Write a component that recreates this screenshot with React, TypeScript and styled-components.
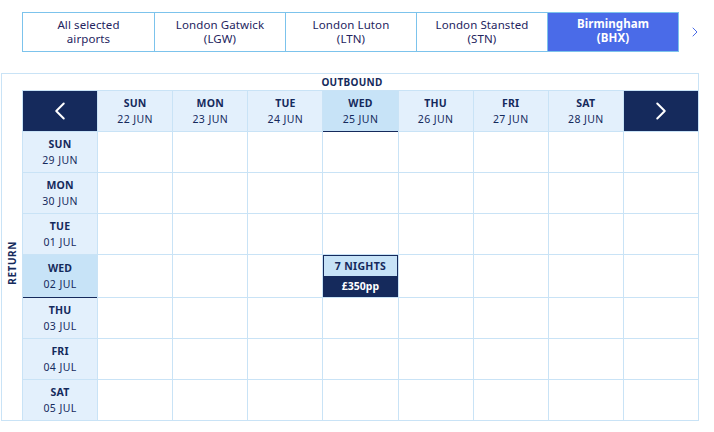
import React from "react";
import styled, { createGlobalStyle, css } from "styled-components";
import { ChevronLeft, ChevronRight } from "lucide-react";

const navy = "#152a5c";
const line = "#c9e3f6";
const paleBlue = "#e3f0fc";
const activeBlue = "#c7e3f7";

const GlobalStyle = createGlobalStyle`
  body {
    margin: 0;
    background: #fff;
    font-family: "Noto Sans", "Open Sans", Arial, sans-serif;
    color: ${navy};
  }
`;

const Page = styled.div`
  width: 714px;
  height: 432px;
  overflow: hidden;
`;

const TabBar = styled.div`
  display: flex;
  align-items: center;
  margin: 12px 0 0 22px;
  height: 40px;
`;

const Tabs = styled.div`
  display: flex;
  border: 1px solid #7cc3ec;
  height: 38px;
`;

const Tab = styled.button<{ $active?: boolean }>`
  width: 131px;
  border: none;
  border-left: 1px solid #7cc3ec;
  padding: 0;
  font-family: inherit;
  font-size: 11.5px;
  line-height: 14px;
  letter-spacing: 0.1px;
  color: #24245e;
  background: #fff;
  text-align: center;
  &:first-child {
    border-left: none;
  }
  ${(p) =>
    p.$active &&
    css`
      background: #4a6be8;
      color: #fff;
      font-weight: 700;
      padding-bottom: 2px;
    `}
`;

const TabNext = styled.div`
  display: flex;
  align-items: center;
  margin-left: 8px;
  color: #4a6be8;
`;

const Calendar = styled.section`
  margin: 21px 0 0 1px;
  width: 696px;
  border: 1px solid ${line};
`;

const Title = styled.div`
  height: 16px;
  font-size: 10px;
  font-weight: 700;
  letter-spacing: 0.3px;
  text-align: center;
  line-height: 16px;
  padding-left: 4px;
`;

const Body = styled.div`
  display: flex;
  margin: 0 -1px -1px 0;
`;

const Side = styled.div`
  width: 20px;
  display: flex;
  align-items: center;
  justify-content: center;
  padding-top: 14px;
`;

const SideLabel = styled.span`
  writing-mode: vertical-rl;
  transform: rotate(180deg);
  font-size: 10px;
  font-weight: 700;
  letter-spacing: 0.6px;
`;

const Grid = styled.div`
  width: 677px;
  display: grid;
  grid-template-columns: repeat(9, 1fr);
  grid-template-rows: 40px 40px 40px 40px 42px 40px 40px 40px;
  gap: 1px;
  padding: 1px;
  box-sizing: border-box;
  background: ${line};
`;

const NavCell = styled.div`
  background: ${navy};
  color: #fff;
  display: flex;
  align-items: center;
  justify-content: center;
`;

const DayCell = styled.div<{ $active?: boolean }>`
  background: ${(p) => (p.$active ? activeBlue : paleBlue)};
  display: flex;
  flex-direction: column;
  align-items: center;
  justify-content: center;
  gap: 3px;
  ${(p) =>
    p.$active &&
    css`
      box-shadow: 0 1px 0 ${navy};
    `}
`;

const DayName = styled.span`
  font-size: 10.5px;
  font-weight: 700;
  line-height: 13px;
  letter-spacing: 0.2px;
`;

const DayDate = styled.span`
  font-size: 10.5px;
  line-height: 13px;
  letter-spacing: 0.4px;
`;

const Empty = styled.div`
  background: #fff;
`;

const Deal = styled.div`
  display: flex;
  flex-direction: column;
  border: 1px solid ${navy};
  background: #fff;
`;

const Nights = styled.div`
  flex: 1;
  background: ${activeBlue};
  font-size: 10.5px;
  font-weight: 700;
  letter-spacing: 0.3px;
  display: flex;
  align-items: center;
  justify-content: center;
`;

const Price = styled.div`
  flex: 1;
  background: ${navy};
  color: #fff;
  font-size: 10.5px;
  font-weight: 700;
  display: flex;
  align-items: center;
  justify-content: center;
`;

const airports = [
  { name: "All selected", code: "airports" },
  { name: "London Gatwick", code: "(LGW)" },
  { name: "London Luton", code: "(LTN)" },
  { name: "London Stansted", code: "(STN)" },
  { name: "Birmingham", code: "(BHX)", active: true },
];

const outbound = [
  ["SUN", "22 JUN"],
  ["MON", "23 JUN"],
  ["TUE", "24 JUN"],
  ["WED", "25 JUN"],
  ["THU", "26 JUN"],
  ["FRI", "27 JUN"],
  ["SAT", "28 JUN"],
];

const returns = [
  ["SUN", "29 JUN"],
  ["MON", "30 JUN"],
  ["TUE", "01 JUL"],
  ["WED", "02 JUL"],
  ["THU", "03 JUL"],
  ["FRI", "04 JUL"],
  ["SAT", "05 JUL"],
];

const activeOut = 3;
const activeRet = 3;

export default function App() {
  return (
    <Page>
      <GlobalStyle />
      <TabBar>
        <Tabs>
          {airports.map((a) => (
            <Tab key={a.name} $active={a.active}>
              {a.name}
              <br />
              {a.code}
            </Tab>
          ))}
        </Tabs>
        <TabNext>
          <ChevronRight size={16} strokeWidth={1.5} />
        </TabNext>
      </TabBar>

      <Calendar>
        <Title>OUTBOUND</Title>
        <Body>
          <Side>
            <SideLabel>RETURN</SideLabel>
          </Side>
          <Grid>
            <NavCell>
              <ChevronLeft size={30} strokeWidth={1.6} />
            </NavCell>
            {outbound.map(([d, date], i) => (
              <DayCell key={date} $active={i === activeOut}>
                <DayName>{d}</DayName>
                <DayDate>{date}</DayDate>
              </DayCell>
            ))}
            <NavCell>
              <ChevronRight size={30} strokeWidth={1.6} />
            </NavCell>
            {returns.map(([d, date], r) => (
              <React.Fragment key={date}>
                <DayCell $active={r === activeRet}>
                  <DayName>{d}</DayName>
                  <DayDate>{date}</DayDate>
                </DayCell>
                {Array.from({ length: 8 }).map((_, c) =>
                  r === activeRet && c === activeOut ? (
                    <Deal key={c}>
                      <Nights>7 NIGHTS</Nights>
                      <Price>£350pp</Price>
                    </Deal>
                  ) : (
                    <Empty key={c} />
                  )
                )}
              </React.Fragment>
            ))}
          </Grid>
        </Body>
      </Calendar>
    </Page>
  );
}
